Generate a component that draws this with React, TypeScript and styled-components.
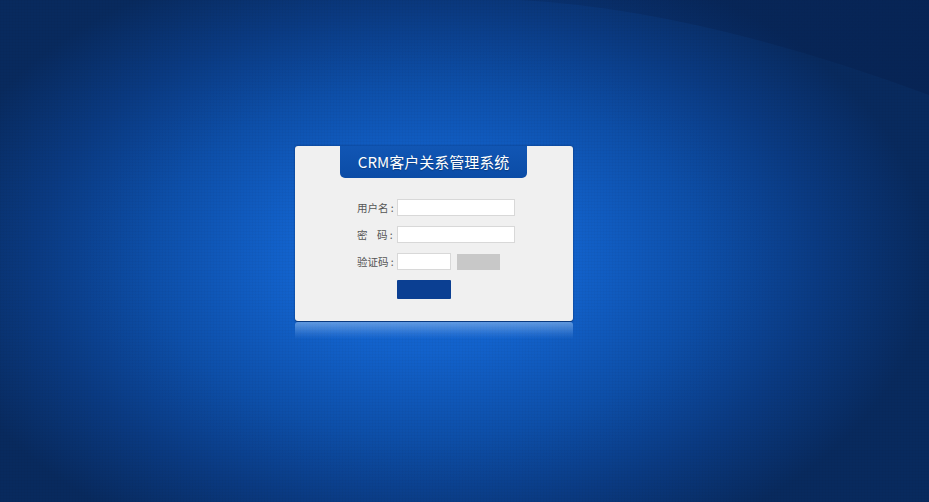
import React from "react";
import styled, { createGlobalStyle } from "styled-components";

const Global = createGlobalStyle`
  html, body { margin: 0; padding: 0; }
  body { font-family: "Noto Sans CJK SC", "Noto Sans", sans-serif; }
  * { box-sizing: border-box; }
`;

const Page = styled.div`
  position: relative;
  width: 929px;
  height: 502px;
  overflow: hidden;
  background:
    repeating-linear-gradient(0deg, rgba(0,0,0,0.025) 0 1px, transparent 1px 3px),
    repeating-linear-gradient(90deg, rgba(0,0,0,0.025) 0 1px, transparent 1px 3px),
    radial-gradient(ellipse 54% 64% at 46% 52%, #1569d8 0%, #1262cc 28%, #0d4fa9 55%, #0a3a82 78%, #082a5e 100%);
  padding: 146px 0 0 295px;
`;

const Curve = styled.svg`
  position: absolute;
  top: 0;
  left: 0;
  pointer-events: none;
`;

const CardWrap = styled.div`
  position: relative;
  width: 278px;
`;

const Card = styled.div`
  width: 278px;
  height: 175px;
  background: #f0f0f0;
  border-radius: 3px;
  box-shadow: 0 1px 0 #0a3a80, 0 0 2px rgba(0, 20, 60, 0.6);
  display: flex;
  flex-direction: column;
  align-items: flex-start;
`;

const TitleTab = styled.div`
  width: 187px;
  height: 32px;
  margin-left: 45px;
  background: linear-gradient(#1156b4, #0b4ca6);
  border-radius: 0 0 5px 5px;
  color: #fff;
  font-size: 15px;
  line-height: 32px;
  text-align: center;
  text-shadow: 0 1px 1px rgba(0, 0, 0, 0.25);
`;

const Form = styled.div`
  margin-top: 21px;
  margin-left: 62px;
  display: flex;
  flex-direction: column;
  gap: 10px;
`;

const Row = styled.div`
  display: flex;
  align-items: center;
  height: 17px;
`;

const Label = styled.span`
  width: 40px;
  font-size: 10.5px;
  color: #555;
  white-space: pre;
`;

const Input = styled.div<{ $w: number }>`
  width: ${(p) => p.$w}px;
  height: 17px;
  background: #fff;
  border: 1px solid #d8d8d8;
`;

const Captcha = styled.div`
  width: 43px;
  height: 16px;
  margin-left: 6px;
  background: #c8c8c8;
`;

const Button = styled.div`
  margin-left: 40px;
  margin-top: 1px;
  width: 54px;
  height: 19px;
  background: #0b3f92;
  border-radius: 1px;
`;

const Reflection = styled.div`
  width: 278px;
  height: 17px;
  margin-top: 1px;
  border-radius: 3px 3px 0 0;
  background: linear-gradient(rgba(160, 200, 245, 0.55), rgba(120, 170, 235, 0.18) 70%, rgba(120, 170, 235, 0));
`;

export default function App() {
  return (
    <>
      <Global />
      <Page>
        <Curve width="929" height="502" viewBox="0 0 929 502">
          <defs>
            <linearGradient id="cg" x1="0" y1="0" x2="1" y2="0">
              <stop offset="0" stopColor="#061f4d" stopOpacity="0.2" />
              <stop offset="1" stopColor="#061f4d" stopOpacity="0.5" />
            </linearGradient>
          </defs>
          <path d="M520 0 Q 700 10 929 95 L929 0 Z" fill="url(#cg)" />
        </Curve>
        <CardWrap>
          <Card>
            <TitleTab>CRM客户关系管理系统</TitleTab>
            <Form>
              <Row>
                <Label>{"用户名 :"}</Label>
                <Input $w={118} />
              </Row>
              <Row>
                <Label>{"密    码 :"}</Label>
                <Input $w={118} />
              </Row>
              <Row>
                <Label>{"验证码 :"}</Label>
                <Input $w={54} />
                <Captcha />
              </Row>
              <Row>
                <Button />
              </Row>
            </Form>
          </Card>
          <Reflection />
        </CardWrap>
      </Page>
    </>
  );
}
